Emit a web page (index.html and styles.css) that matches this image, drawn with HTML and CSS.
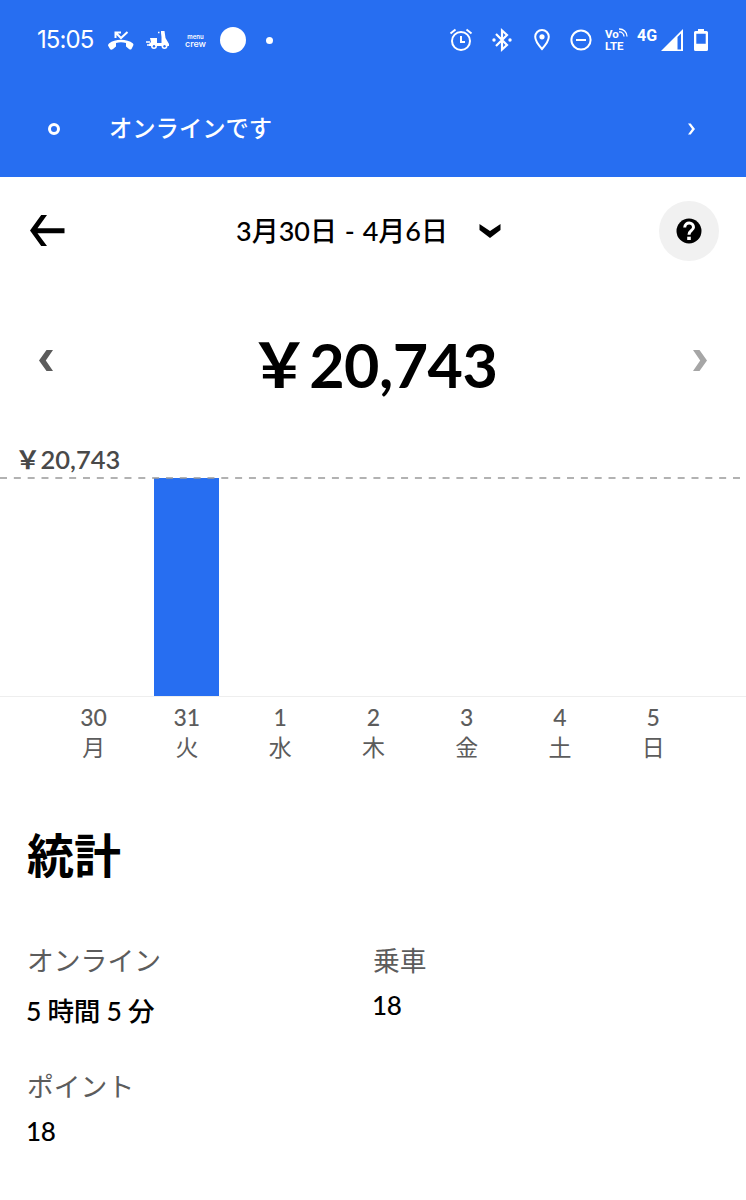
FILE: index.html
```html
<!DOCTYPE html>
<html lang="ja">
<head>
<meta charset="utf-8">
<title>売り上げ</title>
<link rel="stylesheet" href="styles.css">
</head>
<body>
<header class="top">
  <div class="status">
    <span class="clock">15:05</span>
    <svg class="missed" width="26" height="20" viewBox="0 0 26 20"><path d="M2 18L0 14.500Q0 13.500 1 12.500C7 7.500 19 7.500 25 12.500Q26 13.500 25 15L23.500 18Q22.500 19 21 18L18 15.500V12Q13 10.500 8 12V15.500L5 18Q3 19.500 2 18Z" fill="#fff"/><path d="M7.500 7V1.500H13M8 2L13 7L19.500 1" fill="none" stroke="#fff" stroke-width="2"/></svg>
    <svg class="scooter" width="24" height="19" viewBox="0 0 24 19"><path d="M4 7h7v5h4.500V6l-.500-4V0h3.500l1 7 3.500 6v2h-1.500a3 3 0 1 1-6 0H11a3 3 0 1 1-6 0H3v-2l2-2z" fill="#fff"/><path d="M0 11h4M1 14h3M12 1.500h1.500" stroke="#fff" stroke-width="1.500"/><circle cx="8" cy="15.300" r="1.200" fill="#276ef1"/><circle cx="18.500" cy="15.300" r="1.200" fill="#276ef1"/></svg>
    <span class="crew"><small>menu</small><b>crew</b></span>
    <i class="big-dot"></i><i class="small-dot"></i>
    <svg class="alarm" width="24" height="24" viewBox="0 0 24 24" fill="none" stroke="#fff" stroke-width="2"><circle cx="12" cy="13" r="9"/><path d="M12 8v6h4M1.500 5.500L6.500 1.500M17.500 1.500l5 4"/></svg>
    <svg class="bluetooth" width="20" height="24" viewBox="0 0 20 24"><path d="M4 6l11 11-5 4.500v-19l5 4.500L4 18" fill="none" stroke="#fff" stroke-width="2.200"/><circle cx="2" cy="12" r="1.700" fill="#fff"/><circle cx="18" cy="12" r="1.700" fill="#fff"/></svg>
    <svg class="pin" width="16" height="22" viewBox="0 0 16 22"><path d="M8 1a6.800 6.800 0 0 0-6.800 6.800C1.200 12.500 8 20 8 20s6.800-7.500 6.800-12.200A6.800 6.800 0 0 0 8 1z" fill="none" stroke="#fff" stroke-width="2"/><circle cx="8" cy="7.800" r="2.600" fill="#fff"/></svg>
    <svg class="dnd" width="22" height="22" viewBox="0 0 22 22" fill="none" stroke="#fff" stroke-width="2"><circle cx="11" cy="11" r="9.600"/><path d="M6 11h10"/></svg>
    <span class="volte"><span>Vo<svg width="9" height="9" viewBox="0 0 9 9" fill="none" stroke="#fff" stroke-width="1.300"><path d="M0 1a7.500 7.500 0 0 1 8 7.500M0 4a4.500 4.500 0 0 1 5 4.500"/></svg></span><span>LTE</span></span>
    <span class="net">4G</span>
    <svg class="signal" width="22" height="22" viewBox="0 0 22 22"><path d="M0 22L22 0v22zM16.500 8v12.500h3.500V4.500z" fill="#fff" fill-rule="evenodd"/></svg>
    <svg class="battery" width="14" height="22" viewBox="0 0 14 22"><path d="M4 0h6v2h2.500Q14 2 14 3.500v17Q14 22 12.500 22h-11Q0 22 0 20.500v-17Q0 2 1.500 2H4zM2.300 4.800v10h9.400v-10z" fill="#fff" fill-rule="evenodd"/></svg>
  </div>
  <div class="online">
    <i class="ring"></i><span class="online-text">オンラインです</span>
    <svg width="7" height="12" viewBox="0 0 7 12"><path d="M0 .500h2.700L7 6l-4.300 5.500H0L4 6z" fill="#fff"/></svg>
  </div>
</header>
<main>
  <nav class="nav">
    <svg class="back" width="36" height="32" viewBox="0 0 36 32"><path d="M11.200 0h5.800L7.500 13.200H34.500v5H7.500L17 31h-5.800L0 15.500z" fill="#000"/></svg>
    <span class="range">3月30日 - 4月6日</span>
    <svg class="down" width="22" height="14" viewBox="0 0 22 14"><path d="M.500 0L11 7 21.500 0v6L11 14 .500 6z" fill="#000"/></svg>
    <span class="help"><svg width="26" height="26" viewBox="0 0 26 26"><circle cx="13" cy="13" r="12.500" fill="#000"/><path d="M8.700 9.500C9 3.200 17.500 3.600 17.500 9.300C17.500 12.500 13 12.500 13 16.700" fill="none" stroke="#fff" stroke-width="3"/><path d="M11.200 18.700h3.600v3.300h-3.600z" fill="#fff"/></svg></span>
  </nav>
  <section class="total">
    <svg width="14" height="21" viewBox="0 0 14 21"><path d="M7.500 0H14L6.800 10.500 14 21H7.500L0 10.500z" fill="#5c5c5c"/></svg>
    <span class="amount">&#xFFE5;20,743</span>
    <svg width="14" height="21" viewBox="0 0 14 21"><path d="M6.500 0H0l7.200 10.500L0 21h6.500L14 10.500z" fill="#a6a6a6"/></svg>
  </section>
  <section class="chart">
    <div class="max">&#xFFE5;20,743</div>
    <div class="plot">
      <svg class="dash" width="746" height="2"><path d="M0 1H746" stroke="#999" stroke-width="1.300" stroke-dasharray="7 6.830"/></svg>
      <i class="bar"></i>
    </div>
    <div class="days">
      <span>30<b>月</b></span><span>31<b>火</b></span><span>1<b>水</b></span><span>2<b>木</b></span><span>3<b>金</b></span><span>4<b>土</b></span><span>5<b>日</b></span>
    </div>
  </section>
  <h1 class="title">統計</h1>
  <dl class="stats">
    <div><dt>オンライン</dt><dd class="time">5 時間 5 分</dd></div>
    <div><dt>乗車</dt><dd>18</dd></div>
    <div><dt>ポイント</dt><dd>18</dd></div>
  </dl>
</main>
</body>
</html>
```
FILE: styles.css
```css
* { box-sizing: border-box; }
body { margin: 0; width: 746px; height: 1200px; overflow: hidden; background: #fff; color: #000; font-family: Lato, "Noto Sans CJK JP", sans-serif; font-weight: 500; }
svg, i { display: block; flex: none; }
.top { height: 177px; background: #276ef1; color: #fff; }
.status { height: 80px; display: flex; align-items: center; padding-left: 37px; white-space: nowrap; }
.clock { width: 71px; font: 400 24px/30px Inter, sans-serif; letter-spacing: -.9px; }
.missed { margin-top: 2px; }
.scooter { margin-left: 12px; }
.crew { width: 21px; margin-left: 15px; display: flex; flex-direction: column; align-items: center; font-family: Inter, sans-serif; }
.crew small { font-size: 6px; line-height: 7px; font-weight: 600; }
.crew b { font-size: 9px; line-height: 9px; margin-top: -1px; font-weight: 500; }
.big-dot { width: 26px; height: 26px; margin-left: 14px; border-radius: 50%; background: #fff; }
.small-dot { width: 7px; height: 7px; margin-left: 20px; border-radius: 50%; background: #fff; }
.alarm { margin-left: 176px; }
.bluetooth { margin-left: 19px; }
.pin { margin-left: 22px; }
.dnd { margin-left: 20px; }
.volte { width: 24px; margin-left: 13px; font: 700 11.500px/12px Roboto, sans-serif; display: flex; flex-direction: column; }
.volte > span { display: flex; }
.net { width: 21px; margin: -9px 0 0 8px; font: 700 16px/20px Roboto, sans-serif; }
.signal { margin-left: 3px; }
.battery { margin-left: 11px; }
.online { height: 97px; display: flex; align-items: center; padding: 0 51px 0 48px; }
.ring { width: 12px; height: 12px; border: 3px solid #fff; border-radius: 50%; }
.online-text { flex: 1; margin: -1px 0 0 49px; font-size: 23.300px; line-height: 30px; }
.nav { height: 106px; display: flex; align-items: center; padding: 1px 27px 0 30px; }
.range { width: 214px; margin-left: 170px; font-size: 27px; line-height: 40px; word-spacing: 1px; white-space: nowrap; }
.down { margin-left: 29px; }
.help { width: 60px; height: 60px; margin-left: auto; border-radius: 50%; background: #f1f1f1; display: grid; place-items: center; }
.total { height: 154px; padding: 0 39px; display: flex; align-items: center; justify-content: space-between; }
.amount { margin-top: 10px; font-size: 61px; line-height: 70px; font-weight: 700; letter-spacing: -.5px; white-space: nowrap; }
.max { height: 40px; padding-left: 15px; color: #494949; font-size: 25.500px; line-height: 44px; font-weight: 600; }
.plot { height: 220px; display: flex; flex-direction: column; border-bottom: 1px solid #eee; }
.dash { position: relative; }
.bar { width: 65px; height: 218px; margin: -1px 0 0 154px; background: #276ef1; }
.days { display: grid; grid-template-columns: repeat(7, 93.250px); padding: 5px 0 0 47px; color: #5c5c5c; font-size: 23px; line-height: 30px; text-align: center; }
.days b { display: block; font-weight: 400; }
.title { margin: 58px 0 0 27px; font-size: 47px; line-height: 70px; font-weight: 700; }
.stats { margin: 51px 0 0 27px; display: grid; grid-template-columns: 346px 346px; grid-template-rows: 126px 100px; font-size: 26.800px; }
.stats dt { color: #5c5c5c; line-height: 40px; font-weight: 400; }
.stats dd { margin: 5px 0 0 -1px; line-height: 38px; font-size: 26px; letter-spacing: -.3px; }
.stats .time { margin-top: 11px; font-size: 26.600px; }
```
